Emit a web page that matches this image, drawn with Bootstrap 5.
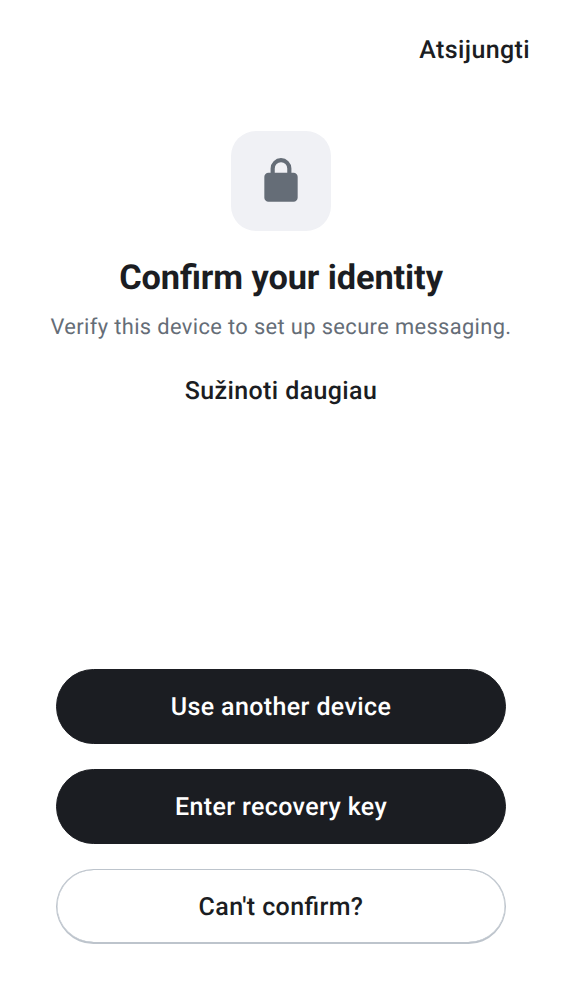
<!DOCTYPE html>
<html lang="lt">
<head>
<meta charset="utf-8">
<meta name="viewport" content="width=device-width, initial-scale=1">
<title>Confirm your identity</title>
<link href="https://cdn.jsdelivr.net/npm/bootstrap@5.3.0/dist/css/bootstrap.min.css" rel="stylesheet">
<style>
body{font-family:Roboto,sans-serif;color:#1b1d22;background:#fff;height:1000px;text-rendering:geometricPrecision;font-feature-settings:"liga" 1}
.btn{--bs-btn-font-family:Roboto,sans-serif;--bs-btn-font-size:25px;--bs-btn-font-weight:500;--bs-btn-line-height:38px;letter-spacing:.38px;font-feature-settings:"liga" 1;text-rendering:geometricPrecision}
.text-action{--bs-btn-color:#1b1d22;--bs-btn-padding-x:0;--bs-btn-padding-y:0;--bs-btn-border-width:0}
.top-bar{height:100px;padding:2px 32px 0 0}
.lock-tile{width:100px;height:100px;border-radius:25px;background:#f0f1f5;margin-top:31px}
.screen-title{font-size:34.375px;line-height:44px;font-weight:700;letter-spacing:-.1px;margin-top:25px}
.screen-note{font-size:21.875px;line-height:31px;letter-spacing:.37px;color:#656d77;margin-top:12px}
.learn{margin-top:30px}
.actions{width:450px;gap:25px;margin-bottom:56px}
.pill{--bs-btn-border-radius:38px;height:75px;padding-top:2px;padding-bottom:0}
.pill-dark{--bs-btn-color:#fff;--bs-btn-bg:#1b1d22;--bs-btn-border-color:#1b1d22}
.pill-line{--bs-btn-color:#1b1d22;padding-top:4px;border:1px solid #bdc4cc;border-bottom-width:2px;box-shadow:inset .5px 0 #bdc4cc,inset -.5px 0 #bdc4cc}
</style>
</head>
<body class="d-flex flex-column align-items-center">
<header class="top-bar d-flex w-100 justify-content-end align-items-center"><button class="btn text-action">Atsijungti</button></header>
<main class="d-flex flex-column align-items-center flex-grow-1 text-center">
<div class="lock-tile d-flex align-items-center justify-content-center">
<svg width="50" height="50" viewBox="0 0 24 24" fill="#656d77"><path d="M6 22q-.825 0-1.412-.587A1.93 1.93 0 0 1 4 20V10q0-.825.588-1.412A1.93 1.93 0 0 1 6 8h1V6q0-2.075 1.463-3.537Q9.926 1 12 1t3.537 1.463T17 6v2h1q.824 0 1.413.588Q20 9.175 20 10v10q0 .824-.587 1.413A1.93 1.93 0 0 1 18 22zM9 8h6V6q0-1.25-.875-2.125A2.9 2.9 0 0 0 12 3q-1.25 0-2.125.875A2.9 2.9 0 0 0 9 6z"/></svg>
</div>
<h1 class="screen-title mb-0">Confirm your identity</h1>
<p class="screen-note mb-0">Verify this device to set up secure messaging.</p>
<button class="btn text-action learn">Sužinoti daugiau</button>
</main>
<footer class="actions d-flex flex-column">
<button class="btn pill pill-dark">Use another device</button>
<button class="btn pill pill-dark">Enter recovery key</button>
<button class="btn pill pill-line">Can't confirm?</button>
</footer>
<script src="https://cdn.jsdelivr.net/npm/bootstrap@5.3.0/dist/js/bootstrap.bundle.min.js"></script>
</body>
</html>
